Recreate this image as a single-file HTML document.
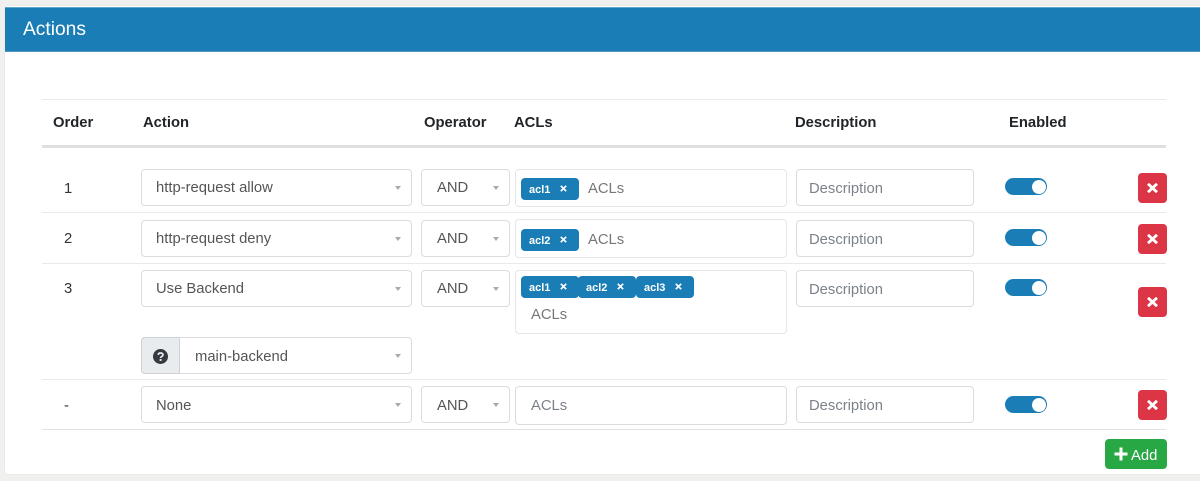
<!DOCTYPE html>
<html><head><meta charset="utf-8"><style>
*{box-sizing:border-box}
html,body{margin:0;padding:0;width:1200px;height:481px;overflow:hidden;background:#f0f0ee;font-family:"Liberation Sans",sans-serif}
#card{position:absolute;left:5px;top:6px;width:1195px;height:468px;background:#fff;border-radius:3px 0 0 3px;box-shadow:0 0 1px #ccc}
#hd{position:absolute;left:5px;top:7px;width:1195px;height:45px;background:#1a7db5;border-top:1px solid #5fa6cf;border-bottom:1px solid #4f97c0;color:#fff;font-size:19.2px;line-height:43px;padding-left:18px}
.a{position:absolute;white-space:nowrap}
.l{position:absolute;left:42px;width:1124px;background:#e9e9ec;height:1px}
.h{position:absolute;top:114px;font-size:14.8px;font-weight:bold;color:#212529;line-height:18px;white-space:nowrap}
.n{position:absolute;font-size:14.8px;color:#333;line-height:18px}
.s{position:absolute;height:37px;background:#fff;border:1px solid #dcdce0;border-radius:4px;font-size:14.8px;color:#555;line-height:37px;padding-left:14px;white-space:nowrap}
.s:after{content:"";position:absolute;right:10px;top:16px;border-left:3.5px solid transparent;border-right:3.5px solid transparent;border-top:4px solid #aaa}
.i{position:absolute;background:#fff;border:1px solid #e6e6ea;border-radius:4px;font-size:14.8px;color:#777;white-space:nowrap}
.d{position:absolute;left:796px;width:178px;height:37px;background:#fff;border:1px solid #dcdce0;border-radius:4px;font-size:14.8px;color:#7b828a;line-height:38px;padding-left:12px}
.p{position:absolute;height:22px;background:#1a7db5;border-radius:4px;color:#fff;font-size:11px;font-weight:bold;line-height:24px;padding-left:8px;width:58px}
.p svg{position:absolute;left:39px;top:7px}
.ph{position:absolute;font-size:14.8px;color:#777;line-height:18px}
.t{position:absolute;left:1005px;width:42px;height:17px;background:#1a7db5;border-radius:9px}
.t:after{content:"";position:absolute;right:1px;top:1.5px;width:14px;height:14px;background:#fff;border-radius:50%}
.x{position:absolute;left:1138px;width:29px;height:30px;background:#dc3545;border-radius:4px}
.x svg{position:absolute;left:9px;top:10px}
</style></head><body>
<div id="card"></div>
<div id="hd">Actions</div>

<div class="l" style="top:99px"></div>
<div class="l" style="top:145px;height:3px;background:#dfdfe2"></div>
<div class="l" style="top:212px"></div>
<div class="l" style="top:263px"></div>
<div class="l" style="top:379px"></div>
<div class="l" style="top:429px;background:#e2e2e6"></div>

<div class="h" style="left:53px">Order</div>
<div class="h" style="left:143px">Action</div>
<div class="h" style="left:424px">Operator</div>
<div class="h" style="left:514px">ACLs</div>
<div class="h" style="left:795px">Description</div>
<div class="h" style="left:1009px">Enabled</div>

<!-- row 1 -->
<div class="n" style="left:64px;top:179.5px">1</div>
<div class="s" style="left:141px;top:169px;width:271px">http-request allow</div>
<div class="s" style="left:421px;top:169px;width:89px;padding-left:15px">AND</div>
<div class="i" style="left:515px;top:169px;width:272px;height:38px"></div>
<div class="p" style="left:521px;top:178px">acl1<svg width="7" height="7" viewBox="0 0 7 7"><path d="M.8 .8L6.2 6.2M6.2 .8L.8 6.2" stroke="#fff" stroke-width="1.7"/></svg></div>
<div class="ph" style="left:588px;top:180px">ACLs</div>
<div class="d" style="top:169px">Description</div>
<div class="t" style="top:178px"></div>
<div class="x" style="top:173px"><svg width="11" height="10" viewBox="0 0 11 10"><path d="M1 .8L10 9.2M10 .8L1 9.2" stroke="#fff" stroke-width="2.8"/></svg></div>

<!-- row 2 -->
<div class="n" style="left:64px;top:230px">2</div>
<div class="s" style="left:141px;top:220px;width:271px">http-request deny</div>
<div class="s" style="left:421px;top:220px;width:89px;padding-left:15px">AND</div>
<div class="i" style="left:515px;top:219px;width:272px;height:39px"></div>
<div class="p" style="left:521px;top:229px">acl2<svg width="7" height="7" viewBox="0 0 7 7"><path d="M.8 .8L6.2 6.2M6.2 .8L.8 6.2" stroke="#fff" stroke-width="1.7"/></svg></div>
<div class="ph" style="left:588px;top:231px">ACLs</div>
<div class="d" style="top:220px">Description</div>
<div class="t" style="top:229px"></div>
<div class="x" style="top:224px"><svg width="11" height="10" viewBox="0 0 11 10"><path d="M1 .8L10 9.2M10 .8L1 9.2" stroke="#fff" stroke-width="2.8"/></svg></div>

<!-- row 3 -->
<div class="n" style="left:64px;top:280px">3</div>
<div class="s" style="left:141px;top:270px;width:271px">Use Backend</div>
<div class="s" style="left:421px;top:270px;width:89px;padding-left:15px">AND</div>
<div class="i" style="left:515px;top:270px;width:272px;height:64px"></div>
<div class="p" style="left:521px;top:276px">acl1<svg width="7" height="7" viewBox="0 0 7 7"><path d="M.8 .8L6.2 6.2M6.2 .8L.8 6.2" stroke="#fff" stroke-width="1.7"/></svg></div>
<div class="p" style="left:578px;top:276px">acl2<svg width="7" height="7" viewBox="0 0 7 7"><path d="M.8 .8L6.2 6.2M6.2 .8L.8 6.2" stroke="#fff" stroke-width="1.7"/></svg></div>
<div class="p" style="left:636px;top:276px">acl3<svg width="7" height="7" viewBox="0 0 7 7"><path d="M.8 .8L6.2 6.2M6.2 .8L.8 6.2" stroke="#fff" stroke-width="1.7"/></svg></div>
<div class="ph" style="left:531px;top:306px">ACLs</div>
<div class="d" style="top:270px">Description</div>
<div class="t" style="top:279px"></div>
<div class="x" style="top:287px"><svg width="11" height="10" viewBox="0 0 11 10"><path d="M1 .8L10 9.2M10 .8L1 9.2" stroke="#fff" stroke-width="2.8"/></svg></div>
<div class="s" style="left:141px;top:337px;width:271px;padding-left:53px;line-height:39px">main-backend</div>
<div class="a" style="left:141px;top:337px;width:39px;height:37px;background:#e9ecef;border:1px solid #cfd2d6;border-radius:4px 0 0 4px"><svg style="position:absolute;left:11px;top:10.5px" width="15" height="15" viewBox="0 0 15 15"><circle cx="7.5" cy="7.5" r="7.5" fill="#343a40"/><path d="M5.2 5.9C5.3 4.6 6.3 4 7.6 4C9 4 10 4.8 10 5.9C10 7.4 7.7 7.5 7.6 9" fill="none" stroke="#e9ecef" stroke-width="1.7"/><rect x="6.6" y="10" width="2" height="1.9" fill="#e9ecef"/></svg></div>

<!-- row 4 -->
<div class="n" style="left:64px;top:397px">-</div>
<div class="s" style="left:141px;top:386px;width:271px;line-height:38px">None</div>
<div class="s" style="left:421px;top:386px;width:89px;padding-left:15px;line-height:38px">AND</div>
<div class="i" style="left:515px;top:386px;width:272px;height:39px;border-color:#dcdce0"></div>
<div class="ph" style="left:531px;top:397px;color:#7b828a">ACLs</div>
<div class="d" style="top:386px">Description</div>
<div class="t" style="top:396px"></div>
<div class="x" style="top:390px"><svg width="11" height="10" viewBox="0 0 11 10"><path d="M1 .8L10 9.2M10 .8L1 9.2" stroke="#fff" stroke-width="2.8"/></svg></div>

<div class="a" style="left:1105px;top:439px;width:62px;height:30px;background:#28a745;border-radius:4px;color:#fff;font-size:14.8px;line-height:34px;padding-left:26px">Add<svg style="position:absolute;left:9px;top:8px" width="14" height="14" viewBox="0 0 14 14"><path d="M7 .5V13.5M.5 7H13.5" stroke="#fff" stroke-width="3"/></svg></div>
</body></html>
